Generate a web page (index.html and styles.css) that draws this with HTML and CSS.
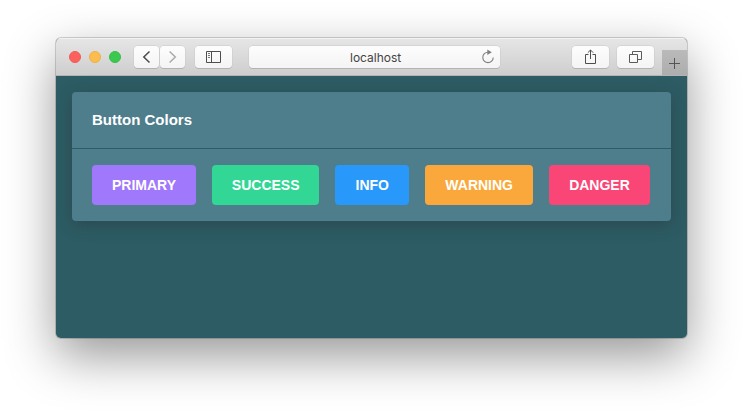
FILE: index.html
```html
<!DOCTYPE html>
<html lang="en">
<head>
<meta charset="utf-8">
<title>Button Colors</title>
<link rel="stylesheet" href="styles.css">
</head>
<body>
<div class="window">
  <header class="toolbar">
    <div class="lights"><i class="light red"></i><i class="light yellow"></i><i class="light green"></i></div>
    <div class="nav">
      <span class="tool half"><svg width="25" height="22" viewBox="0 0 25 22"><path d="M15.5 5.5 9.8 11l5.7 5.5" fill="none" stroke="#4b4b4b" stroke-width="1.5"/></svg></span>
      <span class="tool half"><svg width="25" height="22" viewBox="0 0 25 22"><path d="M9.6 5.5 15.3 11l-5.7 5.5" fill="none" stroke="#aaa" stroke-width="1.5"/></svg></span>
    </div>
    <span class="tool sidebar"><svg width="37" height="22" viewBox="0 0 37 22"><path d="M11.5 5.5h14v11h-14zM16.5 5.5v11" fill="none" stroke="#4e4e4e"/><path d="M13 7.5h2M13 9.5h2M13 11.5h2" stroke="#777"/></svg></span>
    <div class="address">
      <span class="host">localhost</span>
      <svg class="reload" width="14" height="16" viewBox="0 0 14 16"><path d="M7 3.2a5.2 5.2 0 1 0 5.2 5.2" fill="none" stroke="#808080" stroke-width="1.1"/><path d="M6.3.5 10.8 3.2 6.3 6z" fill="#808080"/></svg>
    </div>
    <span class="tool share"><svg width="37" height="22" viewBox="0 0 37 22"><path d="M16.5 8.5h-3v9h10v-9h-3M18.5 13V4M15.8 6.7l2.7-2.7 2.7 2.7" fill="none" stroke="#4e4e4e"/></svg></span>
    <span class="tool tabs"><svg width="37" height="22" viewBox="0 0 37 22"><path d="M12.5 8.5h8v8h-8zM15.5 8.5v-3h9v8h-4" fill="none" stroke="#5a5a5a"/></svg></span>
    <span class="new-tab"><svg width="25" height="26" viewBox="0 0 25 26"><path d="M7 13.5h11M12.5 8v11" stroke="#555"/></svg></span>
  </header>
  <main class="page">
    <section class="card">
      <h1 class="card-title">Button Colors</h1>
      <div class="buttons">
        <button class="btn primary">PRIMARY</button>
        <button class="btn success">SUCCESS</button>
        <button class="btn info">INFO</button>
        <button class="btn warning">WARNING</button>
        <button class="btn danger">DANGER</button>
      </div>
    </section>
  </main>
</div>
</body>
</html>
```
FILE: styles.css
```css
* { box-sizing: border-box; }
body {
  margin: 0;
  height: 412px;
  padding: 38px 56px;
  overflow: hidden;
  background: #fff;
  font-family: "Liberation Sans", Arial, sans-serif;
}
svg { display: block; }
.window {
  width: 631px;
  height: 300px;
  border-radius: 5px;
  overflow: hidden;
  background: #2d5c64;
  box-shadow: 0 0 0 1px rgba(0, 0, 0, .17), 0 18px 50px rgba(0, 0, 0, .41);
}
.toolbar {
  display: flex;
  height: 38px;
  padding: 8px 0 0 13px;
  background: linear-gradient(#e6e6e6, #cecece);
  border-bottom: 1px solid #b4b4b4;
  box-shadow: inset 0 1px #f3f3f3;
}
.lights { display: flex; gap: 8px; padding-top: 5px; width: 65px; }
.light { width: 12px; height: 12px; border-radius: 50%; border: 1px solid; }
.red { background: #fc615d; border-color: #ee5b57; }
.yellow { background: #fdbd4e; border-color: #eeb04a; }
.green { background: #3ac94e; border-color: #38bd49; }
.nav { display: flex; gap: 1px; }
.tool, .address {
  height: 22px;
  border-radius: 4px;
  background: linear-gradient(#fdfdfd, #f4f4f4);
  box-shadow: 0 1px #b3b3b3, 0 0 0 .5px #c9c9c9;
}
.tool { width: 37px; }
.half { width: 25px; }
.sidebar { margin-left: 10px; }
.address {
  display: flex;
  align-items: center;
  width: 251px;
  margin-left: 17px;
  padding-left: 101px;
}
.host { width: 131px; padding-top: 2px; font-family: Inter, sans-serif; font-size: 12px; line-height: 18px; color: #444; }
.reload { margin-top: -1px; }
.share { margin-left: 72px; }
.tabs { margin-left: 8px; }
.new-tab { width: 25px; height: 25px; margin: 4px 0 0 8px; background: linear-gradient(#bababa, #adadad); }
.page { padding: 16px; }
.card {
  width: 599px;
  height: 129px;
  border-radius: 4px;
  background: #4e7d8c;
  box-shadow: 0 4px 16px rgba(40, 45, 50, .4);
}
.card-title {
  height: 57px;
  margin: 0;
  padding: 0 20px;
  border-bottom: 1px solid #2d5c64;
  font-size: 15px;
  line-height: 56px;
  color: #fff;
}
.buttons { display: flex; gap: 16px; padding: 16px 20px; }
.btn {
  height: 40px;
  padding: 0;
  border: 0;
  border-radius: 4px;
  font: bold 14px/40px "Liberation Sans", Arial, sans-serif;
  color: #fff;
}
.primary { width: 104px; background: #a078fb; }
.success { width: 107.4px; background: #32d695; }
.info { width: 73.8px; background: #2899fb; }
.warning { width: 108px; background: #faa83b; }
.danger { width: 100.6px; background: #fa4677; }
```
